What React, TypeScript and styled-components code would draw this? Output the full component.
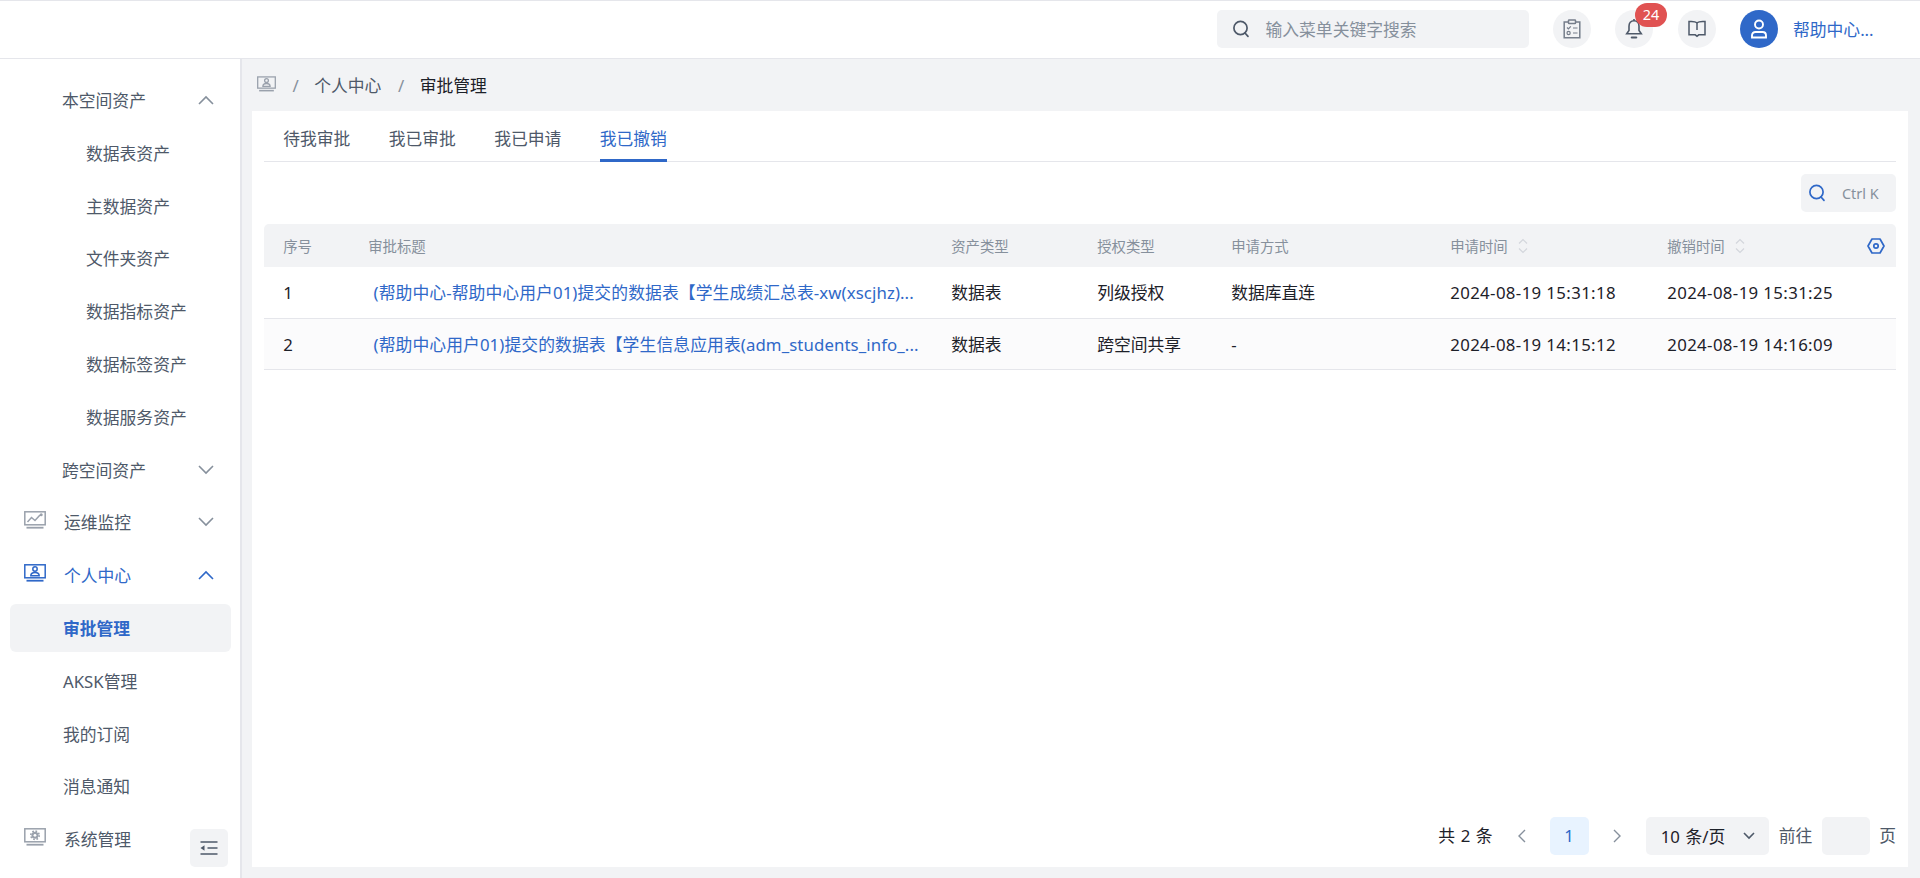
import React from 'react';
import styled, { createGlobalStyle } from 'styled-components';

const FONT = `"Noto Sans", "Noto Sans CJK SC", sans-serif`;
const BLUE = '#2f68c8';
const TEXT = '#1d2129';
const TEXT2 = '#4e5969';
const GREY = '#86909c';
const ICON_GREY = '#9aa1ac';
const FILL = '#f2f3f5';
const LINE = '#e5e6eb';

const GlobalStyle = createGlobalStyle`
  html, body { margin: 0; padding: 0; height: 100%; }
  body { font-family: ${FONT}; color: ${TEXT}; background: #fff; overflow: hidden; }
  * { box-sizing: border-box; }
`;

const Page = styled.div`
  width: 1920px;
  height: 878px;
  display: flex;
  flex-direction: column;
  overflow: hidden;
`;

// header
const Header = styled.header`
  height: 59px;
  flex: none;
  display: flex;
  align-items: center;
  padding-right: 47px;
  padding-bottom: 1px;
  justify-content: flex-end;
  background: #fff;
  border-top: 1px solid ${LINE};
  border-bottom: 1px solid ${LINE};
`;
const SearchBox = styled.div`
  width: 312px;
  height: 38px;
  border-radius: 5px;
  background: ${FILL};
  display: flex;
  align-items: center;
  gap: 16px;
  padding-left: 15px;
  margin-right: 24px;
  color: ${TEXT2};
  font-size: 16.8px;
`;
const Placeholder = styled.span`
  color: ${GREY};
`;
const RoundBtn = styled.div`
  position: relative;
  width: 38px;
  height: 38px;
  border-radius: 50%;
  background: ${FILL};
  color: ${TEXT2};
  display: flex;
  align-items: center;
  justify-content: center;
  margin-right: 24.5px;
`;
const Badge = styled.span`
  position: absolute;
  left: 20px;
  top: -7px;
  width: 32px;
  height: 24px;
  border-radius: 12px;
  background: #e05252;
  color: #fff;
  font-size: 14.4px;
  line-height: 24px;
  text-align: center;
`;
const Avatar = styled.div`
  width: 38px;
  height: 38px;
  border-radius: 50%;
  background: ${BLUE};
  color: #fff;
  display: flex;
  align-items: center;
  justify-content: center;
  margin-right: 15px;
`;
const UserName = styled.span`
  width: 80px;
  color: ${BLUE};
  font-size: 16.8px;
  white-space: nowrap;
`;

// body
const Body = styled.div`
  flex: 1;
  min-height: 0;
  display: flex;
`;
const Sidebar = styled.aside`
  position: relative;
  width: 242px;
  flex: none;
  background: #fff;
  border-right: 2px solid ${LINE};
  padding: 17px 9px 0 10px;
  display: flex;
  flex-direction: column;
  gap: 4.8px;
`;
const MenuRow = styled.div<{ $indent: number; $active?: boolean; $open?: boolean }>`
  height: 48px;
  flex: none;
  display: flex;
  align-items: center;
  padding-left: ${(p) => p.$indent}px;
  padding-right: 17px;
  border-radius: 6px;
  font-size: 16.8px;
  color: ${(p) => (p.$active || p.$open ? BLUE : TEXT2)};
  background: ${(p) => (p.$active ? FILL : 'transparent')};
  font-weight: ${(p) => (p.$active ? 700 : 400)};
`;
const MenuIcon = styled.span<{ $open?: boolean }>`
  width: 41px;
  margin-left: -40px;
  margin-right: -1px;
  display: flex;
  color: ${(p) => (p.$open ? BLUE : ICON_GREY)};
  transform: translateY(-2px);
`;
const MenuLabel = styled.span`
  flex: 1;
`;
const MenuArrow = styled.span<{ $open?: boolean }>`
  display: flex;
  color: ${(p) => (p.$open ? BLUE : GREY)};
`;
const Collapse = styled.div`
  position: absolute;
  left: 190px;
  bottom: 11px;
  width: 38px;
  height: 38px;
  border-radius: 5px;
  background: ${FILL};
  color: ${TEXT2};
  display: flex;
  align-items: center;
  justify-content: center;
`;

// main
const Main = styled.main`
  flex: 1;
  min-width: 0;
  background: ${FILL};
  padding: 0 12px 11px 10px;
  display: flex;
  flex-direction: column;
`;
const Crumbs = styled.nav`
  height: 52px;
  flex: none;
  display: flex;
  align-items: center;
  font-size: 16.8px;
  color: ${TEXT2};
  padding: 0 0 0 5px;
`;
const CrumbIcon = styled.span`
  display: flex;
  color: ${ICON_GREY};
  transform: translateY(-1px);
`;
const CrumbSep = styled.span`
  color: ${GREY};
  margin: 0 15.5px 0 16.5px;
`;
const CrumbCurrent = styled.span`
  color: ${TEXT};
`;
const Card = styled.section`
  flex: 1;
  min-height: 0;
  background: #fff;
  padding: 0 12px;
  display: flex;
  flex-direction: column;
`;
const Tabs = styled.div`
  height: 51px;
  flex: none;
  display: flex;
  border-bottom: 1px solid ${LINE};
`;
const Tab = styled.div<{ $active?: boolean }>`
  position: relative;
  padding: 4px 19.2px 0;
  height: 50px;
  display: flex;
  align-items: center;
  font-size: 16.8px;
  color: ${(p) => (p.$active ? BLUE : TEXT2)};
  &::after {
    content: '';
    display: ${(p) => (p.$active ? 'block' : 'none')};
    position: absolute;
    left: 19.2px;
    right: 19.2px;
    bottom: -1px;
    height: 3px;
    background: ${BLUE};
  }
`;
const Tools = styled.div`
  height: 62px;
  flex: none;
  display: flex;
  justify-content: flex-end;
  padding-top: 12px;
`;
const QuickSearch = styled.div`
  width: 95px;
  height: 38px;
  border-radius: 5px;
  background: ${FILL};
  color: ${BLUE};
  display: flex;
  align-items: center;
  gap: 16px;
  padding-left: 7px;
`;
const CtrlK = styled.span`
  color: ${GREY};
  font-size: 14.4px;
`;

const COLS = '85px 583px 146px 134px 219px 217px 1fr';
const HeadRow = styled.div`
  height: 43.2px;
  flex: none;
  display: grid;
  grid-template-columns: ${COLS};
  align-items: center;
  background: ${FILL};
  border-radius: 5px 5px 0 0;
  font-size: 14.4px;
  color: ${GREY};
`;
const HeadCell = styled.div`
  position: relative;
  padding-left: 19.2px;
  display: flex;
  align-items: center;
`;
const SortMark = styled.span`
  display: flex;
  margin-left: 10px;
  color: #d3d6dc;
`;
const SettingMark = styled.span`
  position: absolute;
  right: 11px;
  top: 50%;
  transform: translateY(-50%);
  display: flex;
  color: ${BLUE};
`;
const Row = styled.div<{ $odd?: boolean }>`
  height: 51.6px;
  flex: none;
  display: grid;
  grid-template-columns: ${COLS};
  align-items: center;
  font-size: 16.8px;
  color: ${TEXT};
  background: ${(p) => (p.$odd ? '#fbfbfc' : '#fff')};
  border-bottom: 1px solid ${LINE};
`;
const Cell = styled.div`
  padding-left: 19.2px;
  white-space: nowrap;
`;
const DateCell = styled(Cell)`
  letter-spacing: 0.38px;
`;
const TitleCell = styled(Cell)`
  color: ${BLUE};
  padding-left: 24.5px;
  letter-spacing: 0.1px;
`;

// pagination
const Pager = styled.div`
  margin-top: auto;
  height: 50px;
  flex: none;
  display: flex;
  align-items: flex-start;
  justify-content: flex-end;
  font-size: 16.8px;
  color: ${TEXT};
  word-spacing: 1.2px;
`;
const PagerText = styled.span<{ $muted?: boolean }>`
  line-height: 38px;
  color: ${(p) => (p.$muted ? TEXT2 : TEXT)};
`;
const PagerArrow = styled.span`
  width: 38px;
  height: 38px;
  margin: 0 9.5px;
  display: flex;
  align-items: center;
  justify-content: center;
  color: ${GREY};
`;
const PageNum = styled.span`
  width: 39px;
  height: 38px;
  border-radius: 5px;
  background: #e8f3ff;
  color: ${BLUE};
  line-height: 38px;
  text-align: center;
`;
const SizeSelect = styled.div`
  width: 123px;
  height: 38px;
  border-radius: 5px;
  background: ${FILL};
  display: flex;
  align-items: center;
  justify-content: space-between;
  padding: 0 14px 0 15px;
  margin-right: 10px;
`;
const SelectArrow = styled.span`
  display: flex;
  color: ${TEXT2};
`;
const JumpInput = styled.div`
  width: 48px;
  height: 38px;
  border-radius: 5px;
  background: ${FILL};
  margin: 0 9px 0 10px;
`;

const Monitor = ({ glyph, small }: { glyph: 'user' | 'chart' | 'gear'; small?: boolean }) => (
  <svg
    width={small ? 19 : 22}
    height={small ? 16 : 18}
    viewBox="0 0 22 18"
    fill="none"
    stroke="currentColor"
    strokeWidth="1.5"
  >
    <rect x="0.8" y="0.8" width="20.4" height="13" />
    <rect x="2.5" y="15.8" width="17" height="1.8" fill="currentColor" stroke="none" />
    {glyph === 'user' && (
      <>
        <circle cx="11" cy="5" r="2.2" />
        <path d="M6.8 11.8c0-2.2 1.7-3.4 4.2-3.4s4.2 1.2 4.2 3.4z" />
      </>
    )}
    {glyph === 'chart' && (
      <>
        <path d="M3.5 11l4-4.5 3.5 3 5-5.5" />
        <circle cx="17.2" cy="3.8" r="1.5" fill="currentColor" stroke="none" />
      </>
    )}
    {glyph === 'gear' && (
      <>
        <circle cx="11" cy="7.3" r="4.2" strokeWidth="1.6" strokeDasharray="1.65 1.65" />
        <circle cx="11" cy="7.3" r="3.5" fill="currentColor" stroke="none" />
        <circle cx="11" cy="7.3" r="1.4" fill="#fff" stroke="none" />
      </>
    )}
  </svg>
);

const Chevron = ({ up }: { up?: boolean }) => (
  <svg width="16" height="10" viewBox="0 0 16 10" fill="none" stroke="currentColor" strokeWidth="1.6">
    <path d={up ? 'M1 9l7-7 7 7' : 'M1 1l7 7 7-7'} />
  </svg>
);

const SearchGlyph = () => (
  <svg width="18" height="18" viewBox="0 0 18 18" fill="none" stroke="currentColor" strokeWidth="1.7">
    <circle cx="8.5" cy="8" r="6.6" />
    <path d="M13 13l3 3.4" strokeLinecap="round" />
  </svg>
);

const ClipboardGlyph = () => (
  <svg width="18" height="20" viewBox="0 0 18 20" fill="none" stroke="#767e8b" strokeWidth="1.5">
    <path d="M5.5 3H1.2v15.8h15.6V3h-4.3" />
    <rect x="5.5" y="1" width="7" height="3.6" rx="0.6" />
    <path d="M4 8.5l1.4 1.4 2.4-2.6M10 9h4.5M10 14h4.5" strokeWidth="1.2" />
    <circle cx="5.6" cy="14" r="1.6" strokeWidth="1.2" />
  </svg>
);

const BellGlyph = () => (
  <svg width="18" height="22" viewBox="0 0 18 22" fill="none" stroke="currentColor" strokeWidth="1.6">
    <path d="M9 2.8c-3.2 0-5 2.4-5 5.4v4.2l-2.3 3.4h14.6L14 12.4V8.2c0-3-1.8-5.4-5-5.4z" />
    <path d="M9 1v1.8" />
    <path d="M6.8 19.5h4.4" strokeWidth="2.2" strokeLinecap="round" />
  </svg>
);

const BookGlyph = () => (
  <svg width="18" height="18" viewBox="0 0 18 18" fill="none" stroke="currentColor" strokeWidth="1.5">
    <path d="M9 2.8C7.5 1.5 4.5 1.2 1 1.5v13.3h6.2L9 16.2l1.8-1.4H17V1.5c-3.5-.3-6.5 0-8 1.3z" />
    <path d="M9 3v7" />
  </svg>
);

const UserGlyph = () => (
  <svg width="18" height="20" viewBox="0 0 18 20" fill="none" stroke="currentColor" strokeWidth="1.9">
    <circle cx="9" cy="5.5" r="4" />
    <path d="M2 18.5v-2c0-2 1.3-3.5 3.5-3.5h7c2.2 0 3.5 1.5 3.5 3.5v2z" />
  </svg>
);

const CollapseGlyph = () => (
  <svg width="18" height="14" viewBox="0 0 18 14" fill="none" stroke="currentColor" strokeWidth="1.7">
    <path d="M0.5 1h17M7.5 7h10M0.5 13h17" />
    <path d="M0.5 7l4-2.8v5.6z" fill="currentColor" stroke="none" />
  </svg>
);

const SortGlyph = () => (
  <svg width="10" height="16" viewBox="0 0 10 16" fill="none" stroke="currentColor" strokeWidth="1.2">
    <path d="M1 5.5l4-4 4 4M1 10.5l4 4 4-4" />
  </svg>
);

const HexGlyph = () => (
  <svg width="18" height="18" viewBox="0 0 18 18" fill="none" stroke="currentColor" strokeWidth="1.7">
    <path d="M5 2h8l4 7-4 7H5L1 9z" strokeLinejoin="round" />
    <circle cx="9" cy="9" r="2.2" />
  </svg>
);

const PagerChevron = ({ right }: { right?: boolean }) => (
  <svg width="9" height="14" viewBox="0 0 9 14" fill="none" stroke="currentColor" strokeWidth="1.4">
    <path d={right ? 'M1 1l6 6-6 6' : 'M8 1L2 7l6 6'} />
  </svg>
);

type MenuItem = {
  label: string;
  indent: number;
  icon?: 'user' | 'chart' | 'gear';
  arrow?: 'up' | 'down';
  active?: boolean;
  open?: boolean;
};

const menu: MenuItem[] = [
  { label: '本空间资产', indent: 52, arrow: 'up' },
  { label: '数据表资产', indent: 76 },
  { label: '主数据资产', indent: 76 },
  { label: '文件夹资产', indent: 76 },
  { label: '数据指标资产', indent: 76 },
  { label: '数据标签资产', indent: 76 },
  { label: '数据服务资产', indent: 76 },
  { label: '跨空间资产', indent: 52, arrow: 'down' },
  { label: '运维监控', indent: 54, icon: 'chart', arrow: 'down' },
  { label: '个人中心', indent: 54, icon: 'user', arrow: 'up', open: true },
  { label: '审批管理', indent: 53, active: true },
  { label: 'AKSK管理', indent: 53 },
  { label: '我的订阅', indent: 53 },
  { label: '消息通知', indent: 53 },
  { label: '系统管理', indent: 54, icon: 'gear' },
];

const rows = [
  {
    no: 1,
    title: '(帮助中心-帮助中心用户01)提交的数据表【学生成绩汇总表-xw(xscjhz)...',
    asset: '数据表',
    auth: '列级授权',
    way: '数据库直连',
    applied: '2024-08-19 15:31:18',
    revoked: '2024-08-19 15:31:25',
  },
  {
    no: 2,
    title: '(帮助中心用户01)提交的数据表【学生信息应用表(adm_students_info_...',
    asset: '数据表',
    auth: '跨空间共享',
    way: '-',
    applied: '2024-08-19 14:15:12',
    revoked: '2024-08-19 14:16:09',
  },
];

export default function App() {
  return (
    <Page>
      <GlobalStyle />
      <Header>
        <SearchBox>
          <SearchGlyph />
          <Placeholder>输入菜单关键字搜索</Placeholder>
        </SearchBox>
        <RoundBtn>
          <ClipboardGlyph />
        </RoundBtn>
        <RoundBtn>
          <BellGlyph />
          <Badge>24</Badge>
        </RoundBtn>
        <RoundBtn>
          <BookGlyph />
        </RoundBtn>
        <Avatar>
          <UserGlyph />
        </Avatar>
        <UserName>帮助中心...</UserName>
      </Header>
      <Body>
        <Sidebar>
          {menu.map((item) => (
            <MenuRow key={item.label} $indent={item.indent} $active={item.active} $open={item.open}>
              {item.icon && (
                <MenuIcon $open={item.open}>
                  <Monitor glyph={item.icon} />
                </MenuIcon>
              )}
              <MenuLabel>{item.label}</MenuLabel>
              {item.arrow && (
                <MenuArrow $open={item.open}>
                  <Chevron up={item.arrow === 'up'} />
                </MenuArrow>
              )}
            </MenuRow>
          ))}
          <Collapse>
            <CollapseGlyph />
          </Collapse>
        </Sidebar>
        <Main>
          <Crumbs>
            <CrumbIcon>
              <Monitor glyph="user" small />
            </CrumbIcon>
            <CrumbSep>/</CrumbSep>
            <span>个人中心</span>
            <CrumbSep>/</CrumbSep>
            <CrumbCurrent>审批管理</CrumbCurrent>
          </Crumbs>
          <Card>
            <Tabs>
              <Tab>待我审批</Tab>
              <Tab>我已审批</Tab>
              <Tab>我已申请</Tab>
              <Tab $active>我已撤销</Tab>
            </Tabs>
            <Tools>
              <QuickSearch>
                <SearchGlyph />
                <CtrlK>Ctrl K</CtrlK>
              </QuickSearch>
            </Tools>
            <HeadRow>
              <HeadCell>序号</HeadCell>
              <HeadCell>审批标题</HeadCell>
              <HeadCell>资产类型</HeadCell>
              <HeadCell>授权类型</HeadCell>
              <HeadCell>申请方式</HeadCell>
              <HeadCell>
                申请时间
                <SortMark>
                  <SortGlyph />
                </SortMark>
              </HeadCell>
              <HeadCell>
                撤销时间
                <SortMark>
                  <SortGlyph />
                </SortMark>
                <SettingMark>
                  <HexGlyph />
                </SettingMark>
              </HeadCell>
            </HeadRow>
            {rows.map((r, i) => (
              <Row key={r.no} $odd={i % 2 === 1}>
                <Cell>{r.no}</Cell>
                <TitleCell>{r.title}</TitleCell>
                <Cell>{r.asset}</Cell>
                <Cell>{r.auth}</Cell>
                <Cell>{r.way}</Cell>
                <DateCell>{r.applied}</DateCell>
                <DateCell>{r.revoked}</DateCell>
              </Row>
            ))}
            <Pager>
              <PagerText>共 2 条</PagerText>
              <PagerArrow>
                <PagerChevron />
              </PagerArrow>
              <PageNum>1</PageNum>
              <PagerArrow>
                <PagerChevron right />
              </PagerArrow>
              <SizeSelect>
                10 条/页
                <SelectArrow>
                  <svg width="12" height="8" viewBox="0 0 12 8" fill="none" stroke="currentColor" strokeWidth="1.6">
                    <path d="M1 1l5 5 5-5" />
                  </svg>
                </SelectArrow>
              </SizeSelect>
              <PagerText $muted>前往</PagerText>
              <JumpInput />
              <PagerText $muted>页</PagerText>
            </Pager>
          </Card>
        </Main>
      </Body>
    </Page>
  );
}
